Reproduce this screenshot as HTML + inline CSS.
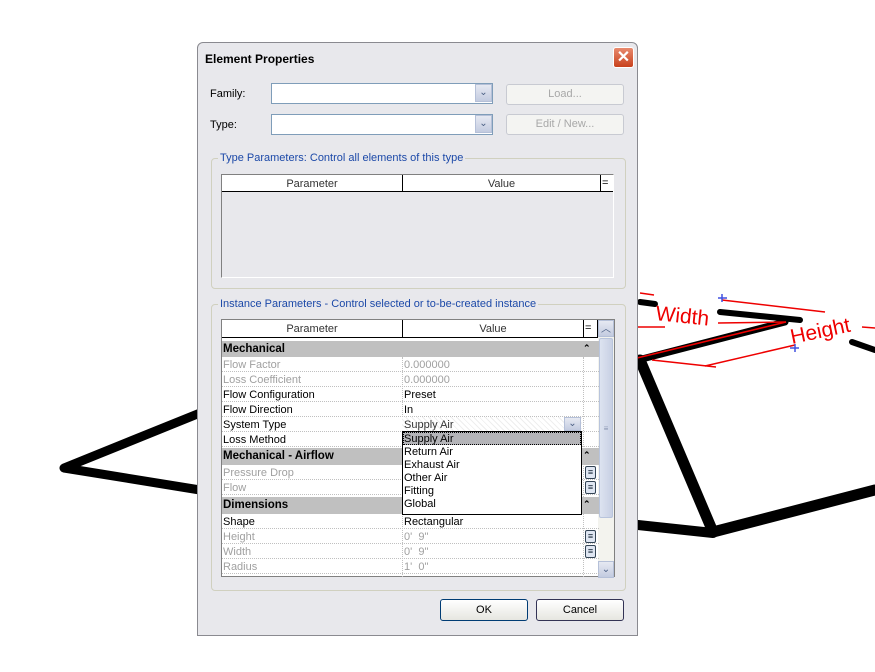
<!DOCTYPE html>
<html><head><style>
*{margin:0;padding:0;box-sizing:border-box}
body{width:875px;height:672px;background:#fff;position:relative;overflow:hidden;font-family:"Liberation Sans",sans-serif;font-size:11px;color:#000}
.a{position:absolute}
.dlg{left:197px;top:42px;width:441px;height:594px;background:#e8e8ec;border:1px solid #8a8a90;border-radius:6px 6px 0 0}
.t{white-space:nowrap}
.combo{background:#fff;border:1px solid #7f9db9}
.dd{width:17px;height:18px;background:linear-gradient(#e6e9f2,#c3cbe0);border:1px solid #b5c0d8;font-size:10px;text-align:center;line-height:16px;color:#4d6185}
.btn{border:1px solid #c8cad2;border-radius:3px;background:#f4f4f2;color:#a8a8a8;text-align:center;line-height:19px}
.grp{border:1px solid #d0d0bf;border-radius:4px}
.leg{background:#e8e8ec;color:#1c49a8;padding:0 2px}
.row{position:absolute;left:0;width:377px;height:15px;border-bottom:1px dotted #c0c0c0}
.row span{position:absolute;top:2px;white-space:nowrap}
.g{color:#a0a0a0}
.hd{background:#c0c0c0;font-weight:bold;font-size:11.5px}
.ok{border:1px solid #003c74;border-radius:3px;background:linear-gradient(#fff,#e6e6e0);text-align:center;line-height:21px}
.eq{position:absolute;left:363px;width:11px;height:13px;border:1px solid #345;border-radius:2px;background:#dfe6f2;font-size:9px;line-height:10px;text-align:center;color:#123}
</style></head><body>
<svg class="a" style="left:0;top:0" width="875" height="672">
<g stroke="#000" fill="none" stroke-linejoin="round" stroke-linecap="round">
<polyline points="200,413 64,468 200,490" stroke-width="9"/>
<polyline points="638,360 785,322" stroke-width="7"/>
<polyline points="640,360 713,532 875,490" stroke-width="11"/>
<polyline points="638,525 713,533" stroke-width="10"/>
<polyline points="720,312 800,320" stroke-width="6"/>
<polyline points="640,302 655,304" stroke-width="6"/>
<polyline points="852,342 875,350" stroke-width="6"/>
</g>
<g stroke="#e00" fill="none" stroke-width="1.5">
<line x1="637" y1="358" x2="786" y2="322"/>
<line x1="652" y1="360" x2="716" y2="367"/>
<line x1="705" y1="366" x2="795" y2="345"/>
<line x1="722" y1="300" x2="825" y2="312"/>
<line x1="718" y1="323" x2="786" y2="322"/>
<line x1="640" y1="293" x2="654" y2="295"/>
<line x1="638" y1="327" x2="665" y2="327"/>
<line x1="862" y1="327" x2="875" y2="328"/>
</g>
<text x="655" y="320" fill="#e00" font-family="Liberation Sans" font-size="21" transform="rotate(6 655 320)">Width</text>
<text x="792" y="344" fill="#e00" font-family="Liberation Sans" font-size="21" transform="rotate(-12 792 344)">Height</text>
<g stroke="#4050e0" stroke-width="1.5"><line x1="718" y1="298" x2="727" y2="298"/><line x1="722" y1="294" x2="722" y2="302"/><line x1="790" y1="348" x2="799" y2="348"/><line x1="795" y1="344" x2="795" y2="352"/></g>
</svg>

<div class="a dlg">
 <div class="a t" style="left:7px;top:9px;font-weight:bold;font-size:12px">Element Properties</div>
 <div class="a" style="left:415px;top:4px;width:21px;height:21px;border:1px solid #fff;border-radius:3px;background:linear-gradient(#e88a6e,#c8401c);color:#fff;text-align:center;font-size:16px;line-height:19px;font-weight:bold">✕</div>
</div>
<div class="a t" style="left:210px;top:88px">Family:</div>
<div class="a combo" style="left:271px;top:83px;width:222px;height:21px"></div>
<div class="a dd" style="left:475px;top:84px">⌄</div>
<div class="a btn" style="left:506px;top:84px;width:118px;height:21px">Load...</div>
<div class="a t" style="left:210px;top:119px">Type:</div>
<div class="a combo" style="left:271px;top:114px;width:222px;height:21px"></div>
<div class="a dd" style="left:475px;top:115px">⌄</div>
<div class="a btn" style="left:506px;top:114px;width:118px;height:21px">Edit / New...</div>

<div class="a grp" style="left:211px;top:158px;width:415px;height:131px"></div>
<div class="a t leg" style="left:218px;top:152px">Type Parameters: Control all elements of this type</div>
<div class="a" style="left:221px;top:174px;width:393px;height:104px;background:#e8e8ec;border:1px solid #808080;border-right-color:#fff;border-bottom-color:#fff"></div>
<div class="a" style="left:222px;top:175px;width:391px;height:17px;background:#fff;border-bottom:1px solid #000"></div>
<div class="a t" style="left:222px;top:178px;width:180px;text-align:center;color:#333">Parameter</div>
<div class="a" style="left:402px;top:175px;width:1px;height:17px;background:#000"></div>
<div class="a t" style="left:403px;top:178px;width:197px;text-align:center;color:#333">Value</div>
<div class="a" style="left:600px;top:175px;width:1px;height:17px;background:#000"></div>
<div class="a t" style="left:602px;top:177px">=</div>

<div class="a grp" style="left:211px;top:304px;width:415px;height:287px"></div>
<div class="a t leg" style="left:218px;top:298px">Instance Parameters - Control selected or to-be-created instance</div>
<div class="a" style="left:221px;top:319px;width:394px;height:258px;border:1px solid #808080;background:#fff"></div>
<div class="a" style="left:222px;top:320px;width:376px;height:18px;border-bottom:1px solid #000"></div>
<div class="a t" style="left:222px;top:323px;width:180px;text-align:center;color:#333">Parameter</div>
<div class="a" style="left:402px;top:320px;width:1px;height:18px;background:#000"></div>
<div class="a t" style="left:403px;top:323px;width:180px;text-align:center;color:#333">Value</div>
<div class="a" style="left:583px;top:320px;width:1px;height:18px;background:#000"></div>
<div class="a t" style="left:585px;top:322px">=</div>
<div class="a" style="left:597px;top:320px;width:1px;height:18px;background:#000"></div>
<div class="a" style="left:598px;top:320px;width:16px;height:256px;background:#f3f3ee"></div>
<div class="a dd" style="left:598px;top:320px;width:16px;height:17px;line-height:17px">︿</div>
<div class="a" style="left:599px;top:338px;width:14px;height:180px;border:1px solid #b8c4dc;border-radius:2px;background:linear-gradient(90deg,#dde3f0,#c8d0e4);color:#8894b0;font-size:8px;text-align:center;line-height:180px">≡</div>
<div class="a dd" style="left:598px;top:561px;width:16px;height:17px;line-height:15px">⌄</div>

<div class="a" style="left:222px;top:341px;width:376px;height:236px">
 <div class="row hd" style="top:0;height:16px"><span style="left:1px">Mechanical</span><span style="left:361px;font-size:9px">⌃</span></div>
 <div class="row g" style="top:16px"><span style="left:1px">Flow Factor</span><span style="left:182px">0.000000</span></div>
 <div class="row g" style="top:31px"><span style="left:1px">Loss Coefficient</span><span style="left:182px">0.000000</span></div>
 <div class="row" style="top:46px"><span style="left:1px">Flow Configuration</span><span style="left:182px">Preset</span></div>
 <div class="row" style="top:61px"><span style="left:1px">Flow Direction</span><span style="left:182px">In</span></div>
 <div class="row" style="top:76px"><span style="left:1px">System Type</span><span style="left:182px;color:#333">Supply Air</span></div>
 <div class="row" style="top:91px"><span style="left:1px">Loss Method</span></div>
 <div class="row hd" style="top:107px;height:17px"><span style="left:1px">Mechanical - Airflow</span><span style="left:361px;font-size:9px">⌃</span></div>
 <div class="row g" style="top:124px"><span style="left:1px">Pressure Drop</span></div>
 <div class="row g" style="top:139px"><span style="left:1px">Flow</span></div>
 <div class="row hd" style="top:156px;height:17px"><span style="left:1px">Dimensions</span><span style="left:361px;font-size:9px">⌃</span></div>
 <div class="row" style="top:173px"><span style="left:1px">Shape</span><span style="left:182px">Rectangular</span></div>
 <div class="row g" style="top:188px"><span style="left:1px">Height</span><span style="left:182px">0'&nbsp; 9"</span></div>
 <div class="row g" style="top:203px"><span style="left:1px">Width</span><span style="left:182px">0'&nbsp; 9"</span></div>
 <div class="row g" style="top:218px"><span style="left:1px">Radius</span><span style="left:182px">1'&nbsp; 0"</span></div>
 <div class="a" style="left:180px;top:16px;width:0;height:220px;border-left:1px dotted #c0c0c0"></div>
 <div class="a" style="left:361px;top:16px;width:0;height:220px;border-left:1px dotted #c0c0c0"></div>
 <div class="eq" style="top:125px">≡</div><div class="eq" style="top:140px">≡</div>
 <div class="eq" style="top:189px">≡</div><div class="eq" style="top:204px">≡</div>
</div>
<div class="a" style="left:402px;top:417px;width:180px;height:14px;background:repeating-linear-gradient(45deg,#eee 0 1px,#fff 1px 4px)"></div>
<div class="a t" style="left:404px;top:419px;color:#333">Supply Air</div>
<div class="a dd" style="left:564px;top:417px;width:17px;height:14px;line-height:12px">⌄</div>
<div class="a" style="left:402px;top:431px;width:180px;height:84px;background:#fff;border:1px solid #000"></div>
<div class="a" style="left:403px;top:432px;width:178px;height:13px;background:#b4b4b8;border:1px dotted #000"></div>
<div class="a t" style="left:404px;top:433px;line-height:13px;font-size:11px">Supply Air<br>Return Air<br>Exhaust Air<br>Other Air<br>Fitting<br>Global</div>

<div class="a ok" style="left:440px;top:599px;width:88px;height:22px">OK</div>
<div class="a ok" style="left:536px;top:599px;width:88px;height:22px;border-color:#335">Cancel</div>
</body></html>
